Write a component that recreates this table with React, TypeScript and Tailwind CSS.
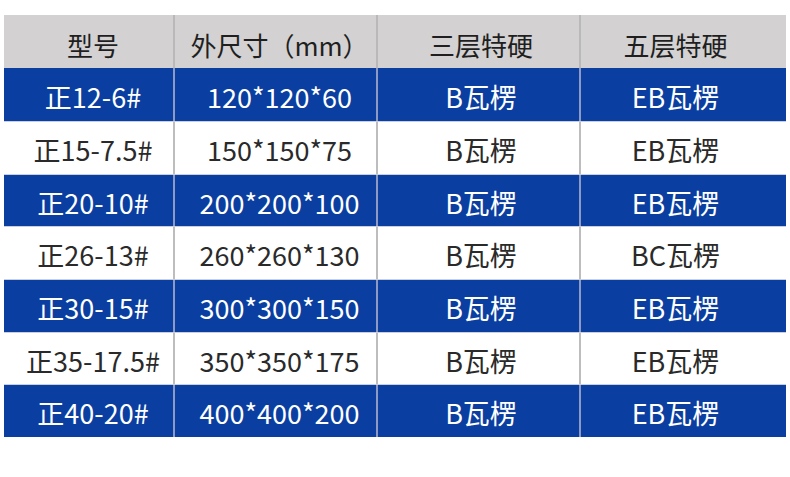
const rows = [
  ["正12-6#", "120*120*60", "B瓦楞", "EB瓦楞"],
  ["正15-7.5#", "150*150*75", "B瓦楞", "EB瓦楞"],
  ["正20-10#", "200*200*100", "B瓦楞", "EB瓦楞"],
  ["正26-13#", "260*260*130", "B瓦楞", "BC瓦楞"],
  ["正30-15#", "300*300*150", "B瓦楞", "EB瓦楞"],
  ["正35-17.5#", "350*350*175", "B瓦楞", "EB瓦楞"],
  ["正40-20#", "400*400*200", "B瓦楞", "EB瓦楞"],
];

const heights = ["h-[53px]", "h-[53px]", "h-[52px]", "h-[53px]", "h-[53px]", "h-[52px]", "h-[53px]"];

const cols = "grid grid-cols-[171px_203px_203px_205px]";
const pads = ["pl-[9px]", "pl-[8px]", "pl-[5px]", "pr-[16px]"];

export default function App() {
  return (
    <div
      className="w-[790px] h-[477px] bg-white pt-[15px] pl-[4px]"
      style={{ fontFamily: '"Noto Sans CJK SC", "Noto Sans", sans-serif' }}
    >
      <div className="w-[782px]">
        <div className={`${cols} h-[53px] bg-[#d3d1d1] text-[#1f1f1f]`}>
          {["型号", "外尺寸（mm）", "三层特硬", "五层特硬"].map((t, i) => (
            <div
              key={t}
              className={`flex items-center justify-center pt-[6px] text-[26px] leading-none ${pads[i]} ${
                i < 3 ? "border-r-[2px] border-[#b9b9b9]" : ""
              }`}
            >
              {t}
            </div>
          ))}
        </div>
        {rows.map((r, ri) => {
          const blue = ri % 2 === 0;
          return (
            <div
              key={r[0]}
              className={`${cols} ${heights[ri]} ${
                blue ? "bg-[#0a3fa1] text-white" : "bg-white text-[#2a2a2a]"
              } ${ri > 0 ? "border-t border-[#c9cfdc]" : ""}`}
            >
              {r.map((t, i) => (
                <div
                  key={i}
                  className={`flex items-center justify-center pt-[3px] text-[27px] leading-none ${pads[i]} ${
                    i < 3
                      ? blue
                        ? "border-r-[2px] border-[#8d9bc4]"
                        : "border-r-[2px] border-[#bdbdbd]"
                      : ""
                  }`}
                >
                  {t}
                </div>
              ))}
            </div>
          );
        })}
      </div>
    </div>
  );
}
